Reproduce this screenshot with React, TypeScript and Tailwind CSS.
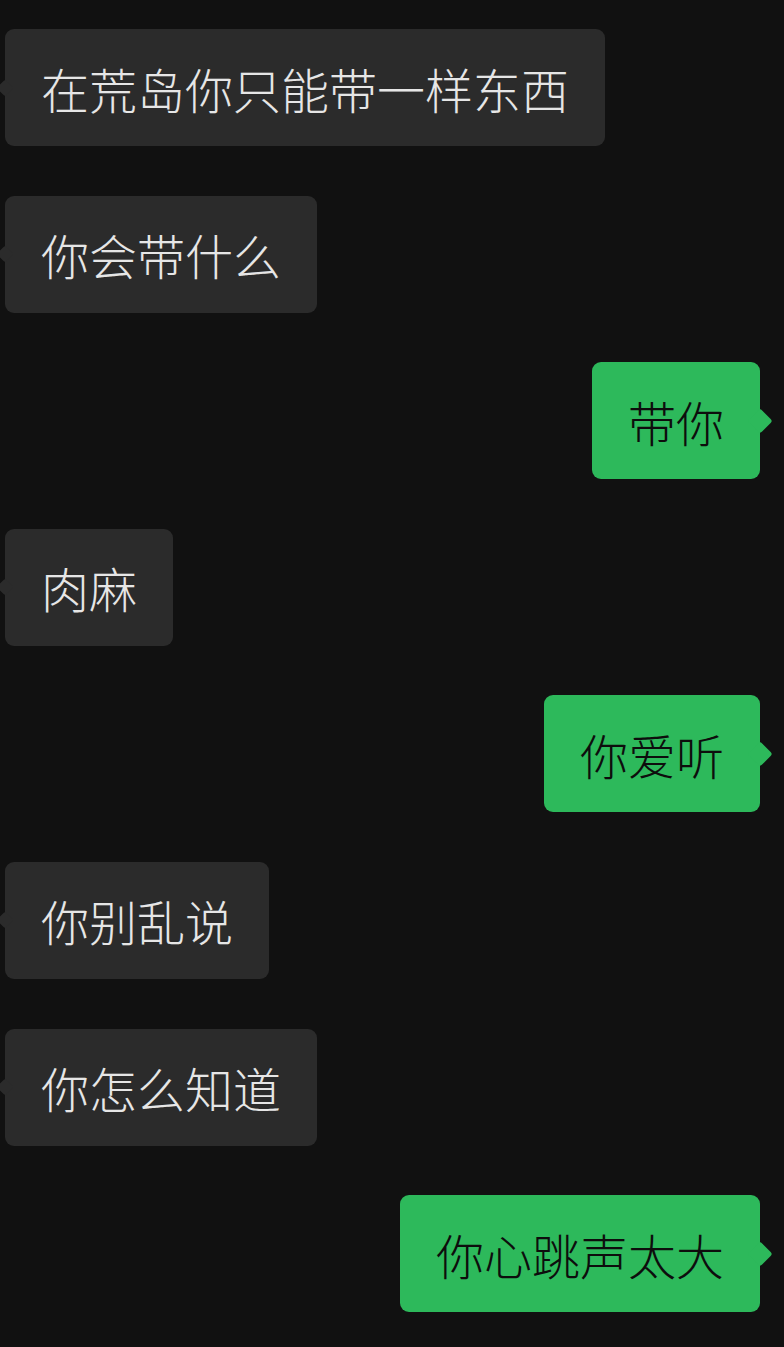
import React from "react";

type Msg = { text: string; mine: boolean };

const messages: Msg[] = [
  { text: "在荒岛你只能带一样东西", mine: false },
  { text: "你会带什么", mine: false },
  { text: "带你", mine: true },
  { text: "肉麻", mine: false },
  { text: "你爱听", mine: true },
  { text: "你别乱说", mine: false },
  { text: "你怎么知道", mine: false },
  { text: "你心跳声太大", mine: true },
];

const Bubble = ({ text, mine }: Msg) => {
  if (mine) {
    return (
      <div className="relative self-end mr-[24px] h-[117px] flex items-center px-9 rounded-[9px] bg-[#2db95b] text-[#0d0d0d]">
        <span className="text-[48px] leading-none font-light">{text}</span>
        <div className="absolute right-[-9px] top-1/2 -translate-y-1/2 w-[18px] h-[18px] rotate-45 rounded-[3px] bg-[#2db95b]" />
      </div>
    );
  }
  return (
    <div className="relative self-start ml-[5px] h-[117px] flex items-center px-9 rounded-[9px] bg-[#2b2b2b] text-[#e6e6e6]">
      <div className="absolute left-[-6px] top-1/2 -translate-y-1/2 w-[12px] h-[12px] rotate-45 rounded-[2px] bg-[#2b2b2b]" />
      <span className="relative text-[48px] leading-none font-light">{text}</span>
    </div>
  );
};

const App = () => {
  return (
    <div
      className="w-[784px] h-[1347px] overflow-hidden bg-[#111111] flex flex-col gap-[49.6px] pt-[29px]"
      style={{ fontFamily: '"Noto Sans CJK SC", "Noto Sans", sans-serif' }}
    >
      {messages.map((m, i) => (
        <Bubble key={i} {...m} />
      ))}
    </div>
  );
};

export default App;
